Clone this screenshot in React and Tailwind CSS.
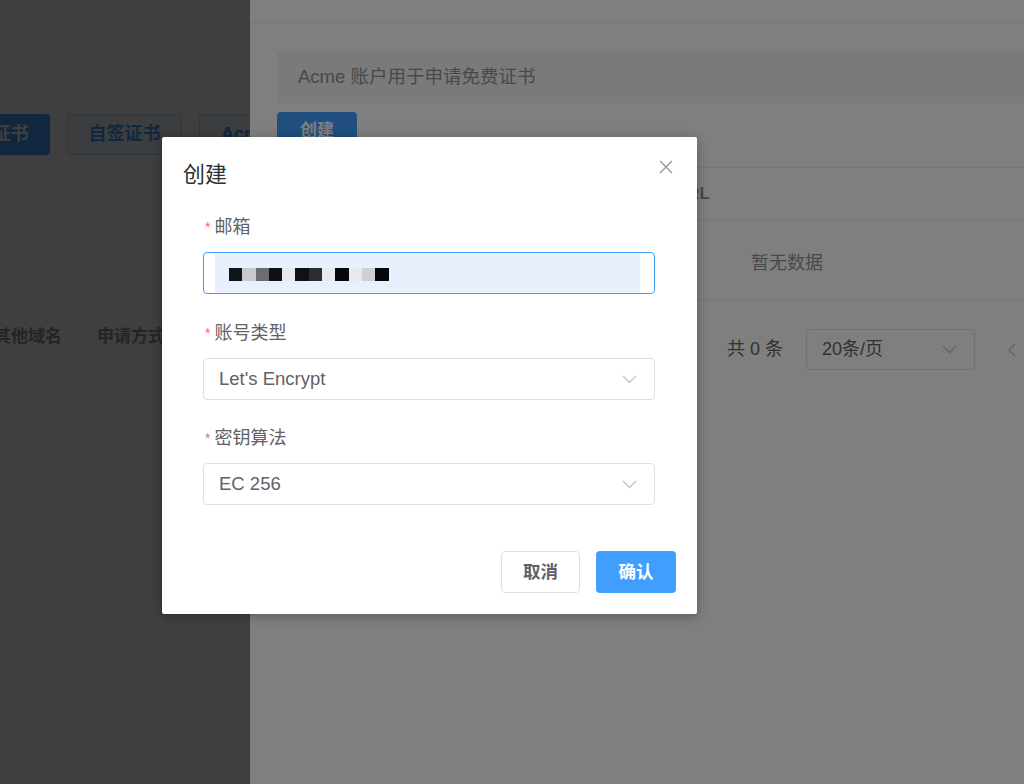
import React from 'react'

const FONT = { fontFamily: '"Liberation Sans", "Noto Sans CJK SC", sans-serif' }

const Chevron = () => (
    <svg width="15" height="9" viewBox="0 0 15 9" fill="none">
        <polyline points="1,1 7.5,7.5 14,1" stroke="#c0c4cc" strokeWidth="1.3" />
    </svg>
)

// pixelated email, one cell ~13px
const CELLS = ['#111418', '#c8c9ce', '#6b6d72', '#0d1117', '#e6e9ef', '#0f1116', '#2a2d33', '#e6e9ef', '#05070d', '#e6e9ef', '#cdd0d6', '#05070d']

const Label = ({ children }) => (
    <div className="flex items-center h-[24px] leading-[24px] mb-[13px]">
        <span className="text-[14px] text-[#f56c6c] mr-[4px] ml-[2px]">*</span>
        <span className="text-[18px] text-[#606266]">{children}</span>
    </div>
)

const SelectBox = ({ value }) => (
    <div className="h-[42px] border border-[#dcdfe6] rounded-[4px] flex items-center justify-between pl-[15px] pr-[17px]">
        <span className="text-[18.5px] text-[#606266]">{value}</span>
        <Chevron />
    </div>
)

export default function App() {
    return (
        <div className="relative w-[1024px] h-[784px] overflow-hidden bg-white" style={FONT}>
            {/* trang nền */}
            <div className="h-full">
                <div className="h-[100px] border-b border-[#ebeef5]" />
                <div className="flex gap-[17px] mt-[14px] ml-[-65px]">
                    <button className="h-[41px] w-[115px] rounded-[4px] bg-[#409eff] text-white text-[18px] font-bold">免费证书</button>
                    <button className="h-[41px] w-[115px] rounded-[4px] bg-[#ecf5ff] border border-[#b3d8ff] text-[#409eff] text-[18px] font-bold">自签证书</button>
                    <button className="h-[41px] w-[140px] rounded-[4px] bg-[#ecf5ff] border border-[#b3d8ff] text-[#409eff] text-[18px] font-bold text-left pl-[21px]">Acme 账户</button>
                </div>
                <div className="flex mt-[167px] ml-[-6px] text-[17px] font-bold text-[#909399] h-[30px] items-center">
                    <span className="w-[103px]">其他域名</span>
                    <span>申请方式</span>
                </div>
                <div className="mt-[188px] border-b border-[#ebeef5]" />
            </div>
            <div className="absolute inset-0 bg-black/50" />

            {/* drawer */}
            <div className="absolute top-0 bottom-0 left-[250px] w-[1100px] bg-white">
                <div className="h-[23px] border-b border-[#ebeef5]" />
                <div className="pl-[27px]">
                    <div className="mt-[28px] h-[52px] w-[1020px] rounded-[4px] bg-[#f4f4f5] flex items-center pl-[21px] text-[18.5px] text-[#909399]">
                        Acme 账户用于申请免费证书
                    </div>
                    <button className="mt-[9px] h-[38px] w-[80px] rounded-[4px] bg-[#409eff] text-white text-[17px] font-bold">创建</button>
                    <div className="w-[1020px] mt-[17px] border-t border-[#ebeef5]">
                        <div className="flex h-[53px] items-center border-b border-[#ebeef5] text-[17px] font-bold text-[#909399]">
                            <span className="w-[200px] pl-[12px]">邮箱</span>
                            <span className="w-[198px] pl-[12px]">账号类型</span>
                            <span>URL</span>
                        </div>
                        <div className="h-[80px] flex items-center justify-center pt-[6px] border-b border-[#ebeef5] text-[18px] text-[#909399]">
                            暂无数据
                        </div>
                    </div>
                    <div className="flex items-center mt-[28px] ml-[450px] h-[41px]">
                        <span className="text-[18px] text-[#606266]">共 0 条</span>
                        <div className="ml-[23px] w-[169px] h-[41px] border border-[#dcdfe6] rounded-[4px] flex items-center justify-between pl-[15px] pr-[17px]">
                            <span className="text-[18px] text-[#606266]">20条/页</span>
                            <Chevron />
                        </div>
                        <svg className="ml-[33px]" width="8" height="14" viewBox="0 0 8 14" fill="none">
                            <polyline points="7,1 1,7 7,13" stroke="#c0c4cc" strokeWidth="1.3" />
                        </svg>
                    </div>
                </div>
            </div>
            <div className="absolute inset-0 bg-black/50" />

            {/* dialog */}
            <div className="absolute left-[162px] top-[137px] w-[535px] h-[477px] bg-white rounded-[2px] shadow-[0_2px_12px_rgba(0,0,0,0.3)] flex flex-col">
                <div className="flex items-center justify-between pt-[24px] pl-[21px] pr-[24px]">
                    <span className="text-[22px] leading-[28px] text-[#303133]">创建</span>
                    <svg className="mt-[-16px]" width="14" height="14" viewBox="0 0 14 14" fill="none">
                        <path d="M1 1 L13 13 M13 1 L1 13" stroke="#909399" strokeWidth="1.3" />
                    </svg>
                </div>

                <div className="pl-[41px] pr-[42px] mt-[26px]">
                    <Label>邮箱</Label>
                    <div className="h-[42px] border border-[#409eff] rounded-[4px] flex items-stretch pl-[11px] pr-[14px]">
                        <div className="flex-1 bg-[#e8f0fe] flex items-center pl-[14px] pt-[3px]">
                            {CELLS.map((c, i) => (
                                <div key={i} className="w-[13.3px] h-[13px]" style={{ background: c }} />
                            ))}
                        </div>
                    </div>

                    <div className="mt-[27px]">
                        <Label>账号类型</Label>
                        <SelectBox value="Let's Encrypt" />
                    </div>

                    <div className="mt-[26px]">
                        <Label>密钥算法</Label>
                        <SelectBox value="EC 256" />
                    </div>
                </div>

                <div className="flex justify-end gap-[16px] mt-auto pr-[21px] pb-[21px]">
                    <button className="h-[42px] w-[79px] border border-[#dcdfe6] rounded-[4px] bg-white text-[17.5px] font-bold text-[#606266]">取消</button>
                    <button className="h-[42px] w-[80px] rounded-[4px] bg-[#409eff] text-[17.5px] font-bold text-white">确认</button>
                </div>
            </div>
        </div>
    )
}
